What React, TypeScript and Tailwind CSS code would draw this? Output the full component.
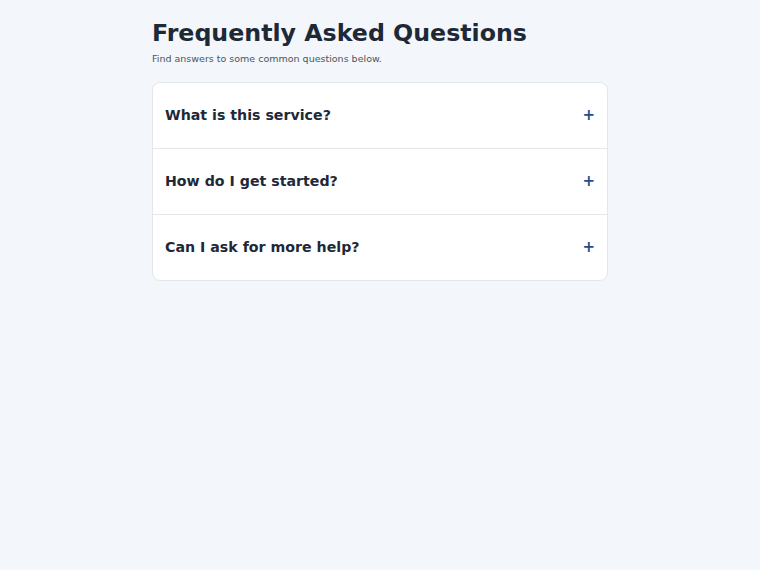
export default function App() {
  const qs = ["What is this service?", "How do I get started?", "Can I ask for more help?"];
  return (
    <div className="min-h-[570px] w-full bg-[#f3f6fa]" style={{ fontFamily: '"DejaVu Sans", sans-serif' }}>
      <div className="mx-auto w-[456px] pt-[18px]">
        <h1 className="text-[23.7px] leading-[30px] font-bold text-[#1e2937]">Frequently Asked Questions</h1>
        <p className="mt-[4px] text-[9.5px] leading-[14px] text-[#4b5563]">Find answers to some common questions below.</p>
        <div className="mt-[16px] rounded-lg border border-[#e3e7ec] bg-white overflow-hidden divide-y divide-[#e3e7ec]">
          {qs.map((q) => (
            <div key={q} className="box-content flex h-[65px] items-center justify-between px-[12px]">
              <span className="text-[14.2px] font-bold text-[#1e2937]">{q}</span>
              <span className="text-[15px] font-bold leading-none text-[#1f4e8c]">+</span>
            </div>
          ))}
        </div>
      </div>
    </div>
  );
}
